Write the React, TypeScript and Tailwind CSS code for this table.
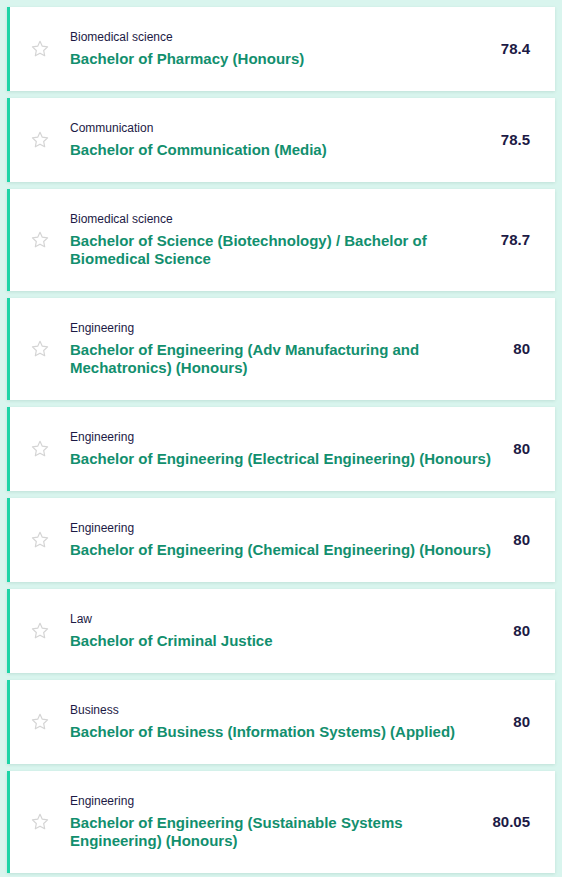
import React from "react";

type Item = { cat: string; title: string; score: string };

const items: Item[] = [
  { cat: "Biomedical science", title: "Bachelor of Pharmacy (Honours)", score: "78.4" },
  { cat: "Communication", title: "Bachelor of Communication (Media)", score: "78.5" },
  { cat: "Biomedical science", title: "Bachelor of Science (Biotechnology) / Bachelor of Biomedical Science", score: "78.7" },
  { cat: "Engineering", title: "Bachelor of Engineering (Adv Manufacturing and Mechatronics) (Honours)", score: "80" },
  { cat: "Engineering", title: "Bachelor of Engineering (Electrical Engineering) (Honours)", score: "80" },
  { cat: "Engineering", title: "Bachelor of Engineering (Chemical Engineering) (Honours)", score: "80" },
  { cat: "Law", title: "Bachelor of Criminal Justice", score: "80" },
  { cat: "Business", title: "Bachelor of Business (Information Systems) (Applied)", score: "80" },
  { cat: "Engineering", title: "Bachelor of Engineering (Sustainable Systems Engineering) (Honours)", score: "80.05" },
];

function Star() {
  return (
    <svg width="20" height="20" viewBox="0 0 24 24" fill="none" stroke="#d4d4d4" strokeWidth="1.4" strokeLinejoin="round">
      <path d="M12 2.8l2.75 5.82 6.35.8-4.66 4.4 1.2 6.3L12 17.04 6.36 20.12l1.2-6.3L2.9 9.42l6.35-.8z" />
    </svg>
  );
}

export default function App() {
  return (
    <div
      className="min-h-[877px] w-full bg-[#d9f5ee] px-[7px] pt-[7px] pb-[5px] flex flex-col gap-[7px]"
      style={{ fontFamily: '"Liberation Sans", Arial, sans-serif' }}
    >
      {items.map((it, i) => (
        <div
          key={i}
          className="flex items-center bg-white border-l-[3px] border-[#1dd4a6] shadow-[0_1px_3px_rgba(0,80,60,0.12)] pt-[22px] pb-[23px] pl-[20px] pr-[25px]"
        >
          <div className="w-[20px] shrink-0 flex items-center justify-center">
            <Star />
          </div>
          <div className="flex-1 pl-[20px] pr-[8px] flex flex-col gap-[5px]">
            <div className="text-[12px] leading-[16px] text-[#1c1a45]">{it.cat}</div>
            <div className="text-[15px] leading-[18px] font-bold text-[#128f6e]">{it.title}</div>
          </div>
          <div className="text-[15px] leading-[18px] font-bold text-[#1c1a45] shrink-0">{it.score}</div>
        </div>
      ))}
    </div>
  );
}
